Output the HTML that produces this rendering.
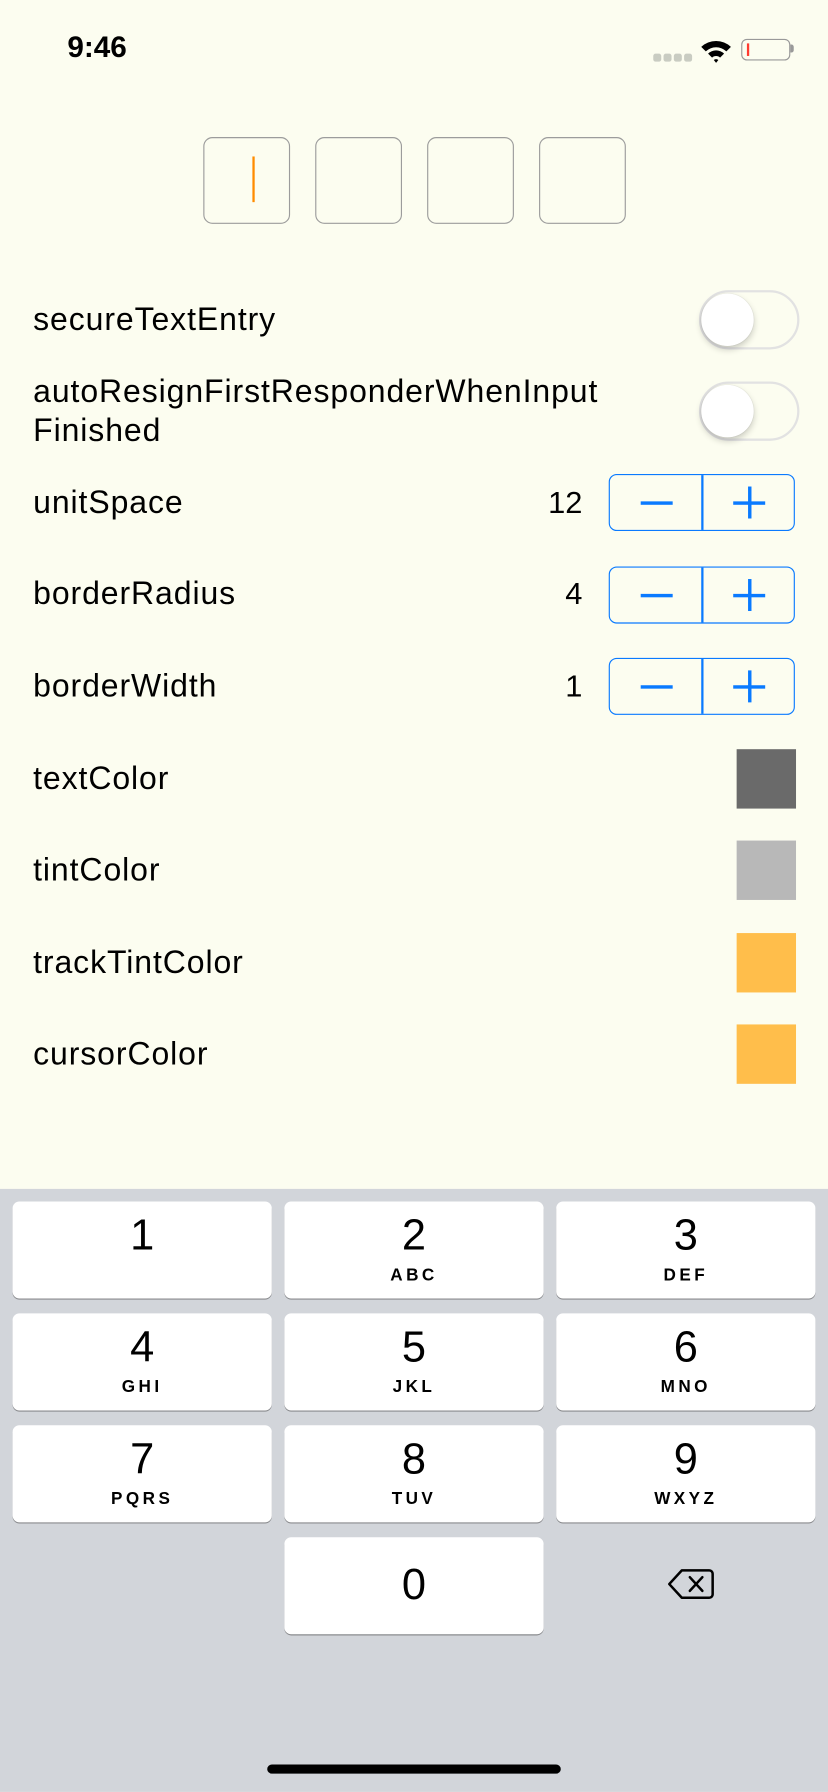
<!DOCTYPE html>
<html><head><meta charset="utf-8"><style>
html,body{margin:0;padding:0;width:828px;height:1792px;overflow:hidden;background:#fcfdf0;}
#w{position:absolute;left:0;top:0;width:725px;height:1569px;transform:scale(1.142069);transform-origin:0 0;font-family:"Liberation Sans",sans-serif;color:#000;}
.a{position:absolute;}
.box{position:absolute;top:120px;width:74px;height:74px;border:1px solid #9c9c9c;border-radius:8px;}
.lbl{position:absolute;left:29px;font-size:28px;letter-spacing:0.8px;line-height:34px;}
.tg{position:absolute;left:612px;width:84px;height:48px;border:2px solid #e2e2e2;border-radius:26px;}
.tg::after{content:"";position:absolute;left:0;top:1px;width:46px;height:46px;border-radius:50%;background:#fff;box-shadow:0 3px 6px rgba(0,0,0,.2),0 0 1px rgba(0,0,0,.2);}
.st{position:absolute;left:533px;width:161px;height:48px;border:1.5px solid #0a7aff;border-radius:7px;}
.st .d{position:absolute;left:80px;top:0;width:1.5px;height:48px;background:#0a7aff;}
.st .m{position:absolute;left:27px;top:23px;width:28px;height:2.5px;background:#0a7aff;}
.st .p1{position:absolute;left:108px;top:23px;width:28px;height:2.5px;background:#0a7aff;}
.st .p2{position:absolute;left:121px;top:10px;width:2.5px;height:28px;background:#0a7aff;}
.val{position:absolute;right:215px;font-size:27px;line-height:34px;}
.sq{position:absolute;left:645px;width:52px;height:52px;}
.kb{position:absolute;left:0;top:1041px;width:725px;height:528px;background:#d2d5da;}
.k{position:absolute;width:227px;height:85px;background:#fff;border-radius:6px;box-shadow:0 1px 0 #898a8d;text-align:center;}
.k b{display:block;font-weight:normal;font-size:38px;line-height:40px;margin-top:10px;}
.k i{display:block;font-style:normal;font-weight:bold;font-size:15px;letter-spacing:3px;line-height:18px;margin-top:6px;}
</style></head><body><div id="w">
<div class="a" style="left:59px;top:26px;font-size:26px;font-weight:bold;">9:46</div>
<div class="a" style="left:572px;top:47px;width:7px;height:7px;border-radius:2px;background:#c9ccc2;box-shadow:9px 0 #c9ccc2,18px 0 #c9ccc2,27px 0 #c9ccc2;"></div>
<svg class="a" style="left:613px;top:34px" width="28" height="22" viewBox="0 0 28 22"><path d="M1 7 A19 19 0 0 1 27 7 L23 11 A13 13 0 0 0 5 11 Z M7 13 A10 10 0 0 1 21 13 L17.5 16.5 A5 5 0 0 0 10.5 16.5Z M12 18.5 A3 3 0 0 1 16 18.5 L14 21Z" fill="#000"/></svg>
<div class="a" style="left:649px;top:34px;width:41px;height:17px;border:1.5px solid #999;border-radius:5px;"></div>
<div class="a" style="left:692px;top:39px;width:3px;height:7px;background:#999;border-radius:0 2px 2px 0;"></div>
<div class="a" style="left:654px;top:38px;width:2px;height:11px;background:#ff3b30;"></div>

<div class="box" style="left:178px"></div><div class="box" style="left:276px"></div><div class="box" style="left:374px"></div><div class="box" style="left:472px"></div>
<div class="a" style="left:221px;top:137px;width:2px;height:40px;background:#ff8c00;"></div>

<div class="lbl" style="top:263px">secureTextEntry</div>
<div class="tg" style="top:254px"></div>
<div class="lbl" style="top:326px">autoResignFirstResponderWhenInput<br>Finished</div>
<div class="tg" style="top:334px"></div>

<div class="lbl" style="top:423px">unitSpace</div><div class="val" style="top:423px">12</div>
<div class="st" style="top:415px"><div class="d"></div><div class="m"></div><div class="p1"></div><div class="p2"></div></div>
<div class="lbl" style="top:503px">borderRadius</div><div class="val" style="top:503px">4</div>
<div class="st" style="top:496px"><div class="d"></div><div class="m"></div><div class="p1"></div><div class="p2"></div></div>
<div class="lbl" style="top:584px">borderWidth</div><div class="val" style="top:584px">1</div>
<div class="st" style="top:576px"><div class="d"></div><div class="m"></div><div class="p1"></div><div class="p2"></div></div>

<div class="lbl" style="top:665px">textColor</div><div class="sq" style="top:656px;background:#6a6a6a"></div>
<div class="lbl" style="top:745px">tintColor</div><div class="sq" style="top:736px;background:#b8b8b8"></div>
<div class="lbl" style="top:826px">trackTintColor</div><div class="sq" style="top:817px;background:#ffbe4b"></div>
<div class="lbl" style="top:906px">cursorColor</div><div class="sq" style="top:897px;background:#ffbe4b"></div>

<div class="kb">
<div class="k" style="left:11px;top:11px"><b style="margin-top:10px">1</b></div>
<div class="k" style="left:249px;top:11px"><b>2</b><i>ABC</i></div>
<div class="k" style="left:487px;top:11px"><b>3</b><i>DEF</i></div>
<div class="k" style="left:11px;top:109px"><b>4</b><i>GHI</i></div>
<div class="k" style="left:249px;top:109px"><b>5</b><i>JKL</i></div>
<div class="k" style="left:487px;top:109px"><b>6</b><i>MNO</i></div>
<div class="k" style="left:11px;top:207px"><b>7</b><i>PQRS</i></div>
<div class="k" style="left:249px;top:207px"><b>8</b><i>TUV</i></div>
<div class="k" style="left:487px;top:207px"><b>9</b><i>WXYZ</i></div>
<div class="k" style="left:249px;top:305px"><b style="margin-top:22px">0</b></div>
<svg class="a" style="left:584px;top:331px" width="42" height="30" viewBox="0 0 42 30"><path d="M13 3 H37 a3 3 0 0 1 3 3 V24 a3 3 0 0 1 -3 3 H13 L2 15 Z" fill="none" stroke="#000" stroke-width="2.2" stroke-linejoin="round"/><path d="M20 9 L31 21 M31 9 L20 21" stroke="#000" stroke-width="2.2" stroke-linecap="round"/></svg>
<div class="a" style="left:234px;top:504px;width:257px;height:8px;border-radius:4px;background:#000"></div>
</div>
</div></body></html>
